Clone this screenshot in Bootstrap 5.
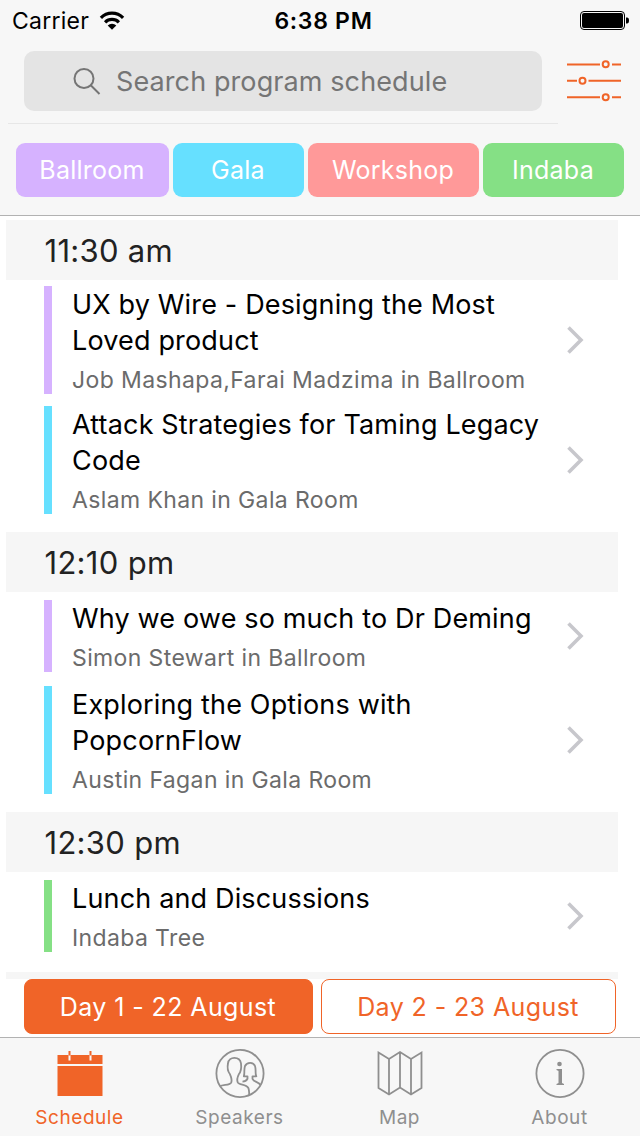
<!DOCTYPE html>
<html lang="en">
<head>
<meta charset="utf-8">
<meta name="viewport" content="width=device-width, initial-scale=1">
<title>Program schedule</title>
<link href="https://cdn.jsdelivr.net/npm/bootstrap@5.3.0/dist/css/bootstrap.min.css" rel="stylesheet">
<style>
  body { font-family: Inter, "Liberation Sans", sans-serif; background: #fff; color: #000; }
  .screen { width: 640px; height: 1136px; }
  .chrome { background: #f7f7f7; }
  .top-area { height: 216px; border-bottom: 1px solid #b2b2b2; }
  .status { height: 41px; padding: 1px 10px 0 12px; font-size: 23px; }
  .carrier { letter-spacing: .25px; }
  .wifi { margin-left: 10px; }
  .clock { font-weight: 600; font-size: 23px; letter-spacing: .7px; padding-left: 7px; }
  .search-row { height: 83px; padding: 10px 18px 0 8px; }
  .search-wrap { width: 550px; padding: 0 16px; height: 73px; border-bottom: 1px solid #e7e7e7; }
  .search-box { height: 60px; background: #e4e4e4; border-radius: 10px; color: #757575; font-size: 27px; letter-spacing: .1px; padding: 2px 0 0 49px; gap: 15px; }
  .filters { padding: 19px 16px 0; gap: 4px; }
  .tag { height: 54px; border-radius: 9px; border: 0; color: #fff; font-size: 25px; letter-spacing: .25px; padding: 2px 1px 0 0; }
  .bg-ballroom { background: #d6b2ff; } .bg-gala { background: #66e0ff; }
  .bg-workshop { background: #ff9999; } .bg-indaba { background: #85e085; }
  .w-a { width: 153px; } .w-b { width: 131px; } .w-c { width: 171px; } .w-d { width: 141px; }
  .schedule { padding: 4px 22px 0 6px; height: 763px; }
  .slot { padding-bottom: 12px; }
  .slot-time { height: 60px; background: #f6f6f6; color: #222; font-size: 31px; letter-spacing: .3px; padding-left: 38.5px; padding-top: 2px; }
  .talk { padding: 6px 33px 6px 38px; }
  .talk.single { padding-top: 8px; padding-bottom: 8px; }
  .stripe { width: 8px; }
  .talk-text { padding: 1px 0 0 20px; width: 500px; }
  .talk-title { font-size: 27px; line-height: 36px; letter-spacing: .16px; }
  .talk-by { font-size: 23px; line-height: 28px; padding-top: 7px; color: #6b6b6b; letter-spacing: .38px; }
  .days { height: 58px; padding-left: 24px; gap: 8px; }
  .day { height: 55px; border-radius: 8px; border: 1px solid #f06428; font-size: 25px; letter-spacing: .4px; padding: 2px 1px 0 0; color: #f06428; background: #fff; }
  .day.on { background: #f06428; color: #fff; }
  .day-1 { width: 289px; } .day-2 { width: 295px; }
  .tabs { height: 99px; border-top: 1px solid #b2b2b2; }
  .tab-link { width: 160px; padding: 10px 1px 0 0; color: #8f8f8f; font-size: 19px; line-height: 26px; text-decoration: none; letter-spacing: .55px; }
  .tab-link.on { color: #f06428; }
  .tab-link svg { display: block; margin-bottom: 7px; }
</style>
</head>
<body>
<div class="screen d-flex flex-column overflow-hidden">
  <header class="chrome top-area flex-shrink-0">
    <div class="status d-flex align-items-center position-relative">
      <span class="carrier">Carrier</span>
      <svg class="wifi" width="26" height="20" viewBox="0 0 26 20" fill="none" stroke="#000" stroke-width="3.2">
        <path d="M1.900 6.800a15.600 15.600 0 0 1 22.200 0M6.100 11.300a9.800 9.800 0 0 1 13.800 0"/>
        <path d="M13 18.700l-4.300-4.300a6.200 6.200 0 0 1 8.600 0z" fill="#000" stroke="none"/>
      </svg>
      <span class="clock position-absolute start-50 translate-middle-x text-nowrap">6:38 PM</span>
      <svg class="ms-auto" width="50" height="20" viewBox="0 0 50 20">
        <rect x=".5" y=".5" width="44" height="18" rx="3.5" fill="none" stroke="#000"/>
        <rect x="2" y="2" width="41" height="15" rx="2" fill="#000"/>
        <path d="M46 6.500h1q2 0 2 3t-2 3h-1z"/>
      </svg>
    </div>
    <div class="search-row d-flex justify-content-between">
      <div class="search-wrap">
        <div class="search-box d-flex align-items-center">
          <svg width="28" height="28" viewBox="0 0 28 28" fill="none" stroke="#757575" stroke-width="2"><circle cx="11" cy="10.500" r="9.500"/><path d="M17.500 17l9 9"/></svg>
          <span>Search program schedule</span>
        </div>
      </div>
      <svg class="mt-2" width="56" height="44" viewBox="0 0 56 44" fill="none" stroke="#f06428" stroke-width="2">
        <path d="M1 5.500h33M46 5.500h9M1 21.700h10M22.500 21.700h32.500M1 38.300h33M46 38.300h9"/>
        <circle cx="39.700" cy="5.300" r="3"/><circle cx="16.500" cy="21.700" r="3"/><circle cx="39.700" cy="38.300" r="3"/>
      </svg>
    </div>
    <div class="filters d-flex">
      <button class="btn tag w-a bg-ballroom">Ballroom</button>
      <button class="btn tag w-b bg-gala">Gala</button>
      <button class="btn tag w-c bg-workshop">Workshop</button>
      <button class="btn tag w-d bg-indaba">Indaba</button>
    </div>
  </header>

  <main class="schedule flex-shrink-0 overflow-hidden">
    <section class="slot">
      <div class="slot-time d-flex align-items-center">11:30 am</div>
      <article class="talk d-flex align-items-stretch">
        <div class="stripe bg-ballroom"></div>
        <div class="talk-text"><div class="talk-title">UX by Wire - Designing the Most<br>Loved product</div><div class="talk-by">Job Mashapa,Farai Madzima in Ballroom</div></div>
        <svg class="ms-auto align-self-center" width="20" height="30" viewBox="0 0 20 30" fill="none" stroke="#c7c7cc" stroke-width="3.600"><path d="M3.500 2.500L16 15 3.500 27.500"/></svg>
      </article>
      <article class="talk d-flex align-items-stretch">
        <div class="stripe bg-gala"></div>
        <div class="talk-text"><div class="talk-title">Attack Strategies for Taming Legacy<br>Code</div><div class="talk-by">Aslam Khan in Gala Room</div></div>
        <svg class="ms-auto align-self-center" width="20" height="30" viewBox="0 0 20 30" fill="none" stroke="#c7c7cc" stroke-width="3.600"><path d="M3.500 2.500L16 15 3.500 27.500"/></svg>
      </article>
    </section>
    <section class="slot">
      <div class="slot-time d-flex align-items-center">12:10 pm</div>
      <article class="talk single d-flex align-items-stretch">
        <div class="stripe bg-ballroom"></div>
        <div class="talk-text"><div class="talk-title">Why we owe so much to Dr Deming</div><div class="talk-by">Simon Stewart in Ballroom</div></div>
        <svg class="ms-auto align-self-center" width="20" height="30" viewBox="0 0 20 30" fill="none" stroke="#c7c7cc" stroke-width="3.600"><path d="M3.500 2.500L16 15 3.500 27.500"/></svg>
      </article>
      <article class="talk d-flex align-items-stretch">
        <div class="stripe bg-gala"></div>
        <div class="talk-text"><div class="talk-title">Exploring the Options with<br>PopcornFlow</div><div class="talk-by">Austin Fagan in Gala Room</div></div>
        <svg class="ms-auto align-self-center" width="20" height="30" viewBox="0 0 20 30" fill="none" stroke="#c7c7cc" stroke-width="3.600"><path d="M3.500 2.500L16 15 3.500 27.500"/></svg>
      </article>
    </section>
    <section class="slot">
      <div class="slot-time d-flex align-items-center">12:30 pm</div>
      <article class="talk single d-flex align-items-stretch">
        <div class="stripe bg-indaba"></div>
        <div class="talk-text"><div class="talk-title">Lunch and Discussions</div><div class="talk-by">Indaba Tree</div></div>
        <svg class="ms-auto align-self-center" width="20" height="30" viewBox="0 0 20 30" fill="none" stroke="#c7c7cc" stroke-width="3.600"><path d="M3.500 2.500L16 15 3.500 27.500"/></svg>
      </article>
    </section>
    <div class="slot-time"></div>
  </main>

  <div class="days d-flex flex-shrink-0">
    <button class="btn day day-1 on">Day 1 - 22 August</button>
    <button class="btn day day-2">Day 2 - 23 August</button>
  </div>

  <nav class="chrome tabs d-flex flex-shrink-0">
    <a class="tab-link on d-flex flex-column align-items-center" href="#">
      <svg width="50" height="50" viewBox="0 0 50 50" fill="#f06428"><path d="M2.500 7h45v9h-45zM2.500 18h45v30h-45z"/><path d="M13.500 7h2v5.500h-2zM34.500 7h2v5.500h-2z" fill="#f7f7f7"/><path d="M13.500 3h2v4.500h-2zM34.500 3h2v4.500h-2z"/></svg>
      Schedule</a>
    <a class="tab-link d-flex flex-column align-items-center" href="#">
      <svg width="50" height="50" viewBox="0 0 50 50" fill="none" stroke="#8f8f8f" stroke-width="1.800" stroke-linejoin="round"><circle cx="25" cy="25.500" r="23.600"/><path d="M5 38.300C8 36.200 15 37.600 16.300 34.300c.8-2.500-.2-5.500-1.300-8-2-2.500-2.800-7-2-11C13.800 8 24.800 8 26 15.300c.5 4-.2 8.500-2.200 11-1.300 2.500-2 5.500-1.100 8 1.500 3 8.300 1.500 10.500 5.500 .8 1.500 1 4 1 7.500"/><path d="M27.500 33.700q3.500-.2 5-2.900v-2.500h-3.700c1.200-3-.2-6 1.200-10.300 2-4.300 8.500-4.300 10 0 1.400 4.300-.2 7.300 1.300 10.300H37.500v2.500c1.500 3.500 6 2.500 8.300 6.500"/></svg>
      Speakers</a>
    <a class="tab-link d-flex flex-column align-items-center" href="#">
      <svg width="50" height="50" viewBox="0 0 50 50" fill="none" stroke="#8f8f8f" stroke-width="1.800"><path d="M3.500 4.500l10.500 6.500 11-7 11 7 10.500-6.500v35.500L36 46.500l-11-7-11 7-10.500-6.500zM14 11v35.500M25 4v35.500M36 11v35.500"/></svg>
      Map</a>
    <a class="tab-link d-flex flex-column align-items-center" href="#">
      <svg width="50" height="50" viewBox="0 0 50 50"><circle cx="25" cy="25.500" r="23.600" fill="none" stroke="#8f8f8f" stroke-width="1.800"/><circle cx="24.500" cy="16" r="2.300" fill="#8f8f8f"/><path d="M21.500 21h5.500v14l2 1v1h-7.500v-1l2-1V23l-2-1z" fill="#8f8f8f"/></svg>
      About</a>
  </nav>
</div>
<script src="https://cdn.jsdelivr.net/npm/bootstrap@5.3.0/dist/js/bootstrap.bundle.min.js"></script>
</body>
</html>
